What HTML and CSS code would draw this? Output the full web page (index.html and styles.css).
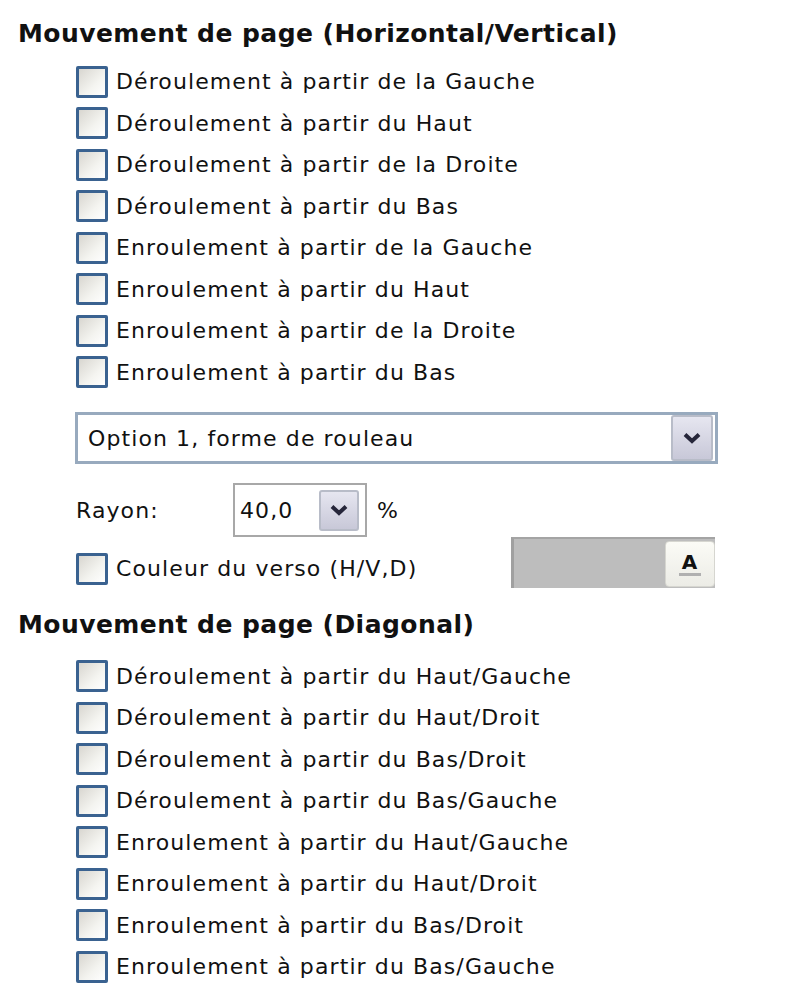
FILE: index.html
```html
<!DOCTYPE html>
<html lang="fr">
<head>
  <meta charset="UTF-8" />
  <title>Mouvement de page</title>
  <link rel="stylesheet" href="styles.css">
</head>
<body>
  <h2 class="group-title first">Mouvement de page (Horizontal/Vertical)</h2>
  <ul class="options">
    <li class="option"><span class="box"></span>Déroulement à partir de la Gauche</li>
    <li class="option"><span class="box"></span>Déroulement à partir du Haut</li>
    <li class="option"><span class="box"></span>Déroulement à partir de la Droite</li>
    <li class="option"><span class="box"></span>Déroulement à partir du Bas</li>
    <li class="option"><span class="box"></span>Enroulement à partir de la Gauche</li>
    <li class="option"><span class="box"></span>Enroulement à partir du Haut</li>
    <li class="option"><span class="box"></span>Enroulement à partir de la Droite</li>
    <li class="option"><span class="box"></span>Enroulement à partir du Bas</li>
  </ul>

  <div class="select">
    <span class="select-text">Option 1, forme de rouleau</span>
    <span class="arrow-btn big">
      <svg width="18" height="12" viewBox="0 0 18 12"><path d="M2 2.5 L9 9 L16 2.5" fill="none" stroke="#26263a" stroke-width="4"/></svg>
    </span>
  </div>

  <div class="radius-row">
    <span class="radius-label">Rayon:</span>
    <div class="spin">
      <span class="spin-value">40,0</span>
      <span class="arrow-btn small">
        <svg width="18" height="12" viewBox="0 0 18 12"><path d="M2 2.5 L9 9 L16 2.5" fill="none" stroke="#26263a" stroke-width="4"/></svg>
      </span>
    </div>
    <span class="unit">%</span>
  </div>

  <div class="color-row">
    <div class="option"><span class="box"></span>Couleur du verso (H/V,D)</div>
    <div class="swatch">
      <span class="swatch-btn"><span class="swatch-a">A</span></span>
    </div>
  </div>

  <h2 class="group-title second">Mouvement de page (Diagonal)</h2>
  <ul class="options">
    <li class="option"><span class="box"></span>Déroulement à partir du Haut/Gauche</li>
    <li class="option"><span class="box"></span>Déroulement à partir du Haut/Droit</li>
    <li class="option"><span class="box"></span>Déroulement à partir du Bas/Droit</li>
    <li class="option"><span class="box"></span>Déroulement à partir du Bas/Gauche</li>
    <li class="option"><span class="box"></span>Enroulement à partir du Haut/Gauche</li>
    <li class="option"><span class="box"></span>Enroulement à partir du Haut/Droit</li>
    <li class="option"><span class="box"></span>Enroulement à partir du Bas/Droit</li>
    <li class="option"><span class="box"></span>Enroulement à partir du Bas/Gauche</li>
  </ul>
</body>
</html>
```

FILE: styles.css
```css
body {
  margin: 0;
  background: #fff;
  color: #111;
  font-family: "DejaVu Sans", Verdana, sans-serif;
  font-size: 22px;
  letter-spacing: 1.1px;
}

.group-title {
  margin: 0;
  padding-left: 18px;
  font-size: 25px;
  font-weight: bold;
  line-height: 32px;
  letter-spacing: 0.45px;
  box-sizing: border-box;
}

.group-title.first {
  padding-top: 18px;
  height: 61px;
}

.group-title.second {
  margin-top: 16px;
  padding-top: 3px;
  height: 50px;
}

.options {
  list-style: none;
  margin: 0;
  padding: 0 0 0 76px;
}

.option {
  display: flex;
  align-items: center;
  height: 41.5px;
  gap: 8px;
}

.box {
  width: 32px;
  height: 32px;
  box-sizing: border-box;
  border: 3px solid #3a6290;
  border-radius: 2px;
  background: linear-gradient(135deg, #d8d6d0, #f4f4f0 60%, #fff);
}

/* dropdown */
.select {
  display: flex;
  align-items: center;
  justify-content: space-between;
  margin: 19px 0 0 75px;
  width: 643px;
  height: 52px;
  box-sizing: border-box;
  border: 3px solid #98aabe;
  padding: 0 2px 0 10px;
  background: #fff;
}

.arrow-btn {
  display: flex;
  align-items: center;
  justify-content: center;
  box-sizing: border-box;
  border: 2px solid #b8bcc8;
  border-radius: 3px;
  background: linear-gradient(#e6e6f0, #c8c8d8);
}

.arrow-btn.big {
  width: 42px;
  height: 46px;
}

.arrow-btn.small {
  width: 40px;
  height: 41px;
}

/* radius */
.radius-row {
  display: flex;
  align-items: center;
  margin-top: 19px;
  padding-left: 76px;
  height: 54px;
}

.radius-label {
  width: 157px;
}

.spin {
  display: flex;
  align-items: center;
  justify-content: space-between;
  width: 134px;
  height: 54px;
  box-sizing: border-box;
  border: 2px solid #a8a8a8;
  padding: 0 6px 0 5px;
}

.unit {
  margin-left: 10px;
}

/* back colour */
.color-row {
  display: flex;
  align-items: flex-start;
  justify-content: space-between;
  padding-left: 76px;
  width: 715px;
  box-sizing: border-box;
}

.color-row .option {
  margin-top: 11px;
}

.swatch {
  display: flex;
  justify-content: flex-end;
  align-items: center;
  width: 204px;
  height: 51px;
  box-sizing: border-box;
  background: #bdbdbd;
  border-top: 2px solid #a4a4a4;
  border-left: 3px solid #a0a0a0;
}

.swatch-btn {
  display: flex;
  align-items: center;
  justify-content: center;
  width: 48px;
  height: 44px;
  border-radius: 4px;
  background: linear-gradient(#fbfbf6, #ecece6);
  border: 1px solid #d6d6d0;
}

.swatch-a {
  font-size: 20px;
  font-weight: bold;
  border-bottom: 3px solid #b0b0b0;
  line-height: 22px;
  padding: 0 3px;
}
```
